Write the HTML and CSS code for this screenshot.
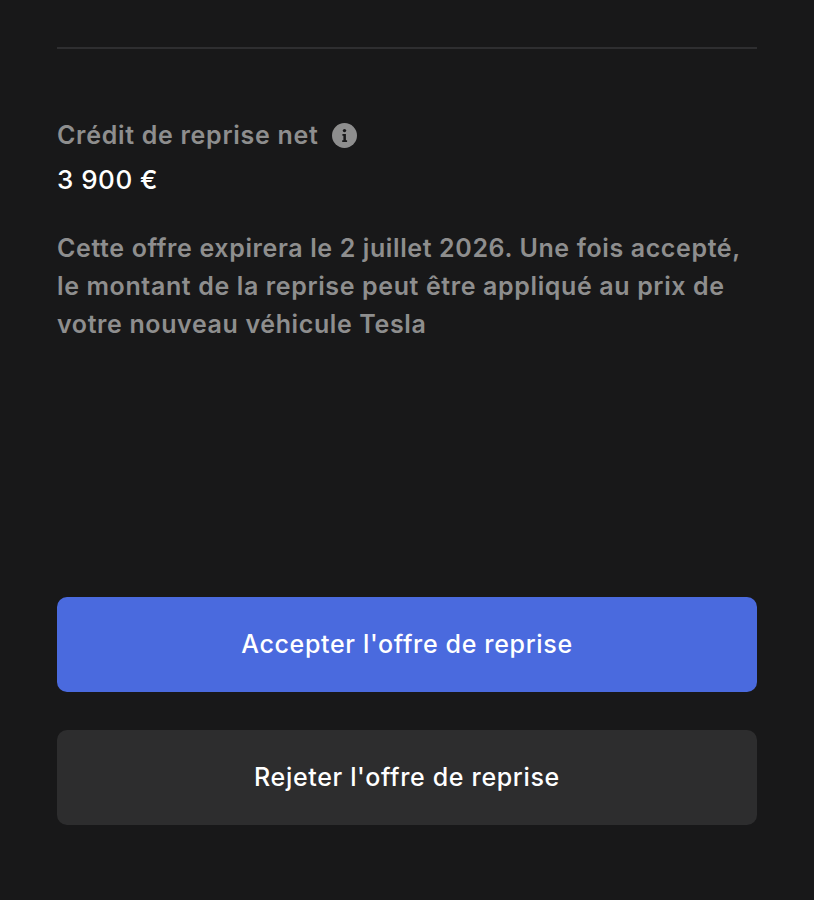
FILE: index.html
```html
<!DOCTYPE html>
<html lang="fr">
<head>
  <meta charset="UTF-8" />
  <title>Offre de reprise</title>
  <link rel="stylesheet" href="styles.css">
</head>
<body>
  <main class="page">
    <hr class="divider">
    <section class="credit">
      <div class="credit-label">
        <span>Crédit de reprise net</span>
        <svg class="info" width="25" height="25" viewBox="0 0 25 25">
          <circle cx="12.5" cy="12.5" r="12.5" fill="#8e8e8e"/>
          <circle cx="12.5" cy="7.6" r="1.7" fill="#181819"/>
          <path d="M10.4 11h3.5v6.2h1.2v1.8h-4.9v-1.8h1.2v-4.4h-1z" fill="#181819"/>
        </svg>
      </div>
      <div class="credit-value">3 900 €</div>
    </section>
    <p class="note">Cette offre expirera le 2 juillet 2026. Une fois accepté, le montant de la reprise peut être appliqué au prix de votre nouveau véhicule Tesla</p>
    <div class="actions">
      <button class="btn btn-accept">Accepter l'offre de reprise</button>
      <button class="btn btn-reject">Rejeter l'offre de reprise</button>
    </div>
  </main>
</body>
</html>
```

FILE: styles.css
```css
* {
  margin: 0;
  padding: 0;
  box-sizing: border-box;
}

body {
  background: #181819;
  font-family: 'Inter', sans-serif;
  color: #fff;
}

.page {
  height: 900px;
  padding: 47px 57px 0;
  display: flex;
  flex-direction: column;
}

.divider {
  border: none;
  height: 2px;
  background: #2e2e30;
}

.credit {
  margin-top: 70px;
}

.credit-label {
  display: flex;
  align-items: center;
  gap: 14px;
  height: 32px;
  font-size: 25px;
  font-weight: 600;
  letter-spacing: 0.7px;
  color: #8e8e8e;
}

.credit-value {
  margin-top: 13px;
  font-size: 26px;
  font-weight: 500;
  letter-spacing: 0.5px;
  line-height: 32px;
}

.note {
  margin-top: 33px;
  font-size: 25px;
  font-weight: 600;
  letter-spacing: 0.62px;
  line-height: 38px;
  color: #8e8e8e;
}

.actions {
  margin-top: 254px;
  display: flex;
  flex-direction: column;
  gap: 38px;
}

.btn {
  height: 95px;
  padding-bottom: 2px;
  border: none;
  border-radius: 10px;
  font-family: inherit;
  font-size: 25px;
  font-weight: 550;
  letter-spacing: 0.66px;
  color: #fff;
}

.btn-accept {
  background: #4a6ade;
}

.btn-reject {
  background: #2d2d2e;
}
```
